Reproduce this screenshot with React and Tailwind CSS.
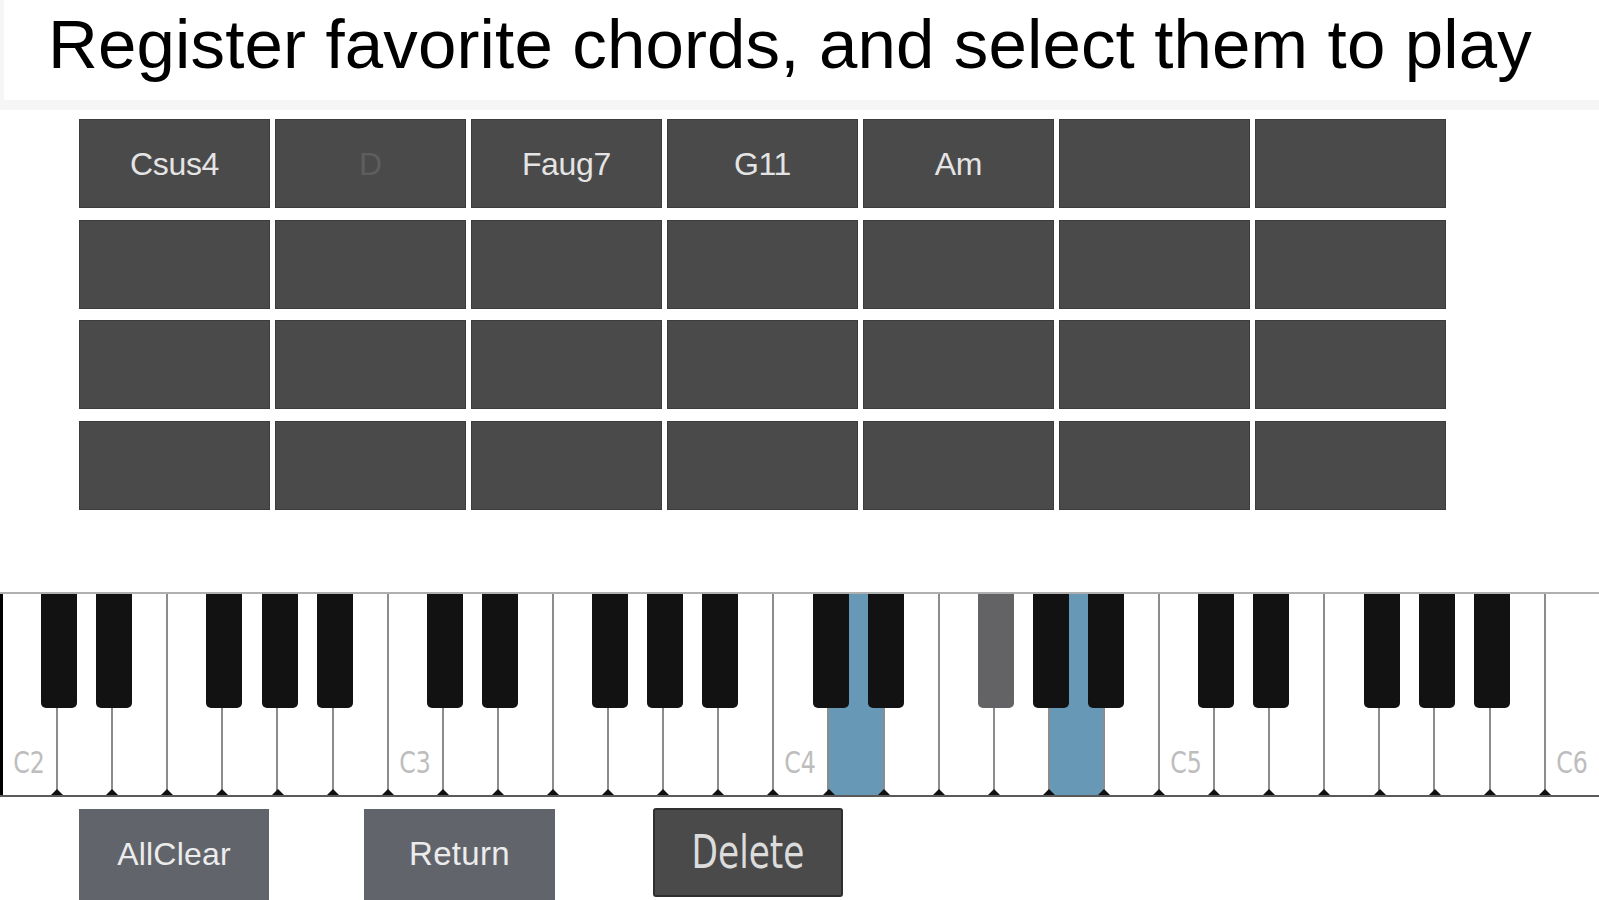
const CHORDS = ["Csus4", "D", "Faug7", "G11", "Am", "", ""];
const SELECTED = "D";

const NOTES = ["C", "D", "E", "F", "G", "A", "B"];
const KEY_W = 55.1;
const KB_LEFT = 3;
const WHITE_COUNT = 29;
// white keys lit up for the selected chord, and black keys (by boundary index)
const LIT_WHITE = new Set([15, 19]);
const LIT_BLACK = new Set([18]);

function ChordGrid() {
  const cells = [];
  for (let r = 0; r < 4; r++) {
    for (let c = 0; c < 7; c++) {
      const label = r === 0 ? CHORDS[c] : "";
      cells.push(
        <button
          key={`${r}-${c}`}
          type="button"
          className={
            "h-[89px] bg-[#4a4a4a] border border-[#3c3c3c] flex items-center justify-center text-[32px] tracking-[-0.3px] font-['Liberation_Sans',Arial,sans-serif] " +
            (label === SELECTED ? "text-[#5e5e5e]" : "text-[#e4e4e4]")
          }
        >
          {label}
        </button>,
      );
    }
  }
  return (
    <div className="ml-[79px] mt-[9px] grid grid-cols-[repeat(7,191px)] gap-x-[5px] gap-y-[11.5px]">
      {cells}
    </div>
  );
}

function Keyboard() {
  const whites = Array.from({ length: WHITE_COUNT }, (_, i) => ({
    i,
    note: NOTES[i % 7],
    octave: 2 + Math.floor(i / 7),
  }));
  const blacks = [];
  for (let i = 0; i < WHITE_COUNT - 1; i++) {
    if ([0, 1, 3, 4, 5].includes(i % 7)) blacks.push(i + 1);
  }

  return (
    <div className="relative mt-[82px] h-[205px] border-t-2 border-b-2 border-t-[#b0b0b0] border-b-[#5a5a5a] overflow-hidden">
      <div className="flex h-full border-l-[3px] border-black">
        {whites.map((w) => (
          <div
            key={w.i}
            className={
              "relative flex-none w-[55.1px] h-full border-r-2 border-[#8c8c8c] flex flex-col justify-end " +
              (LIT_WHITE.has(w.i) ? "bg-[#6798b6] rounded-b-[4px]" : "bg-white")
            }
          >
            {w.note === "C" ? (
              <span className="pl-[12px] pb-[17px] text-[31px] leading-[32px] text-[#bdbdbd] font-['DejaVu_Sans_Condensed','Liberation_Sans_Narrow',sans-serif] [font-stretch:condensed] scale-x-[0.85] origin-left">
                C{w.octave}
              </span>
            ) : null}
          </div>
        ))}
      </div>
      {whites.slice(1).map((w) => (
        <div
          key={`t${w.i}`}
          className="absolute bottom-0 w-0 h-0 border-l-[6px] border-r-[6px] border-b-[6px] border-l-transparent border-r-transparent border-b-[#111]"
          style={{ left: KB_LEFT + KEY_W * w.i - 7 }}
        />
      ))}
      {blacks.map((b) => (
        <div
          key={`b${b}`}
          className={
            "absolute top-0 h-[114px] w-[36px] rounded-b-[5px] " +
            (LIT_BLACK.has(b) ? "bg-[#636366]" : "bg-[#121212]")
          }
          style={{ left: KB_LEFT + KEY_W * b - 17 }}
        />
      ))}
    </div>
  );
}

export default function App() {
  return (
    <div className="w-[1599px] h-[900px] overflow-hidden bg-white flex flex-col font-['Liberation_Sans',Arial,sans-serif]">
      <div className="h-[100px] flex-none border-l-[4px] border-[#f6f6f6] pl-[44px] pt-[10px]">
        <h1 className="text-[69px] leading-[69px] text-black tracking-[0.15px] whitespace-nowrap">
          Register favorite chords, and select them to play
        </h1>
      </div>
      <div className="h-[10px] flex-none bg-[#f6f6f6]" />
      <ChordGrid />
      <Keyboard />
      <div className="flex items-start mt-[12px]">
        <button
          type="button"
          className="ml-[79px] w-[190px] h-[91px] bg-[#62646b] text-[#ececec] text-[32px] tracking-[0.2px] flex items-center justify-center"
        >
          AllClear
        </button>
        <button
          type="button"
          className="ml-[95px] w-[191px] h-[91px] bg-[#62646b] text-[#ececec] text-[33px] tracking-[0.3px] flex items-center justify-center"
        >
          Return
        </button>
        <button
          type="button"
          className="ml-[98px] -mt-[1px] w-[190px] h-[89px] bg-[#4a4a4a] border-2 border-[#2f2f2f] rounded-[3px] text-[#dcdcdc] text-[46px] flex items-center justify-center font-['DejaVu_Sans_Condensed','Liberation_Sans_Narrow',sans-serif] [font-stretch:condensed]"
        >
          <span className="inline-block scale-x-[0.83]">Delete</span>
        </button>
      </div>
    </div>
  );
}
